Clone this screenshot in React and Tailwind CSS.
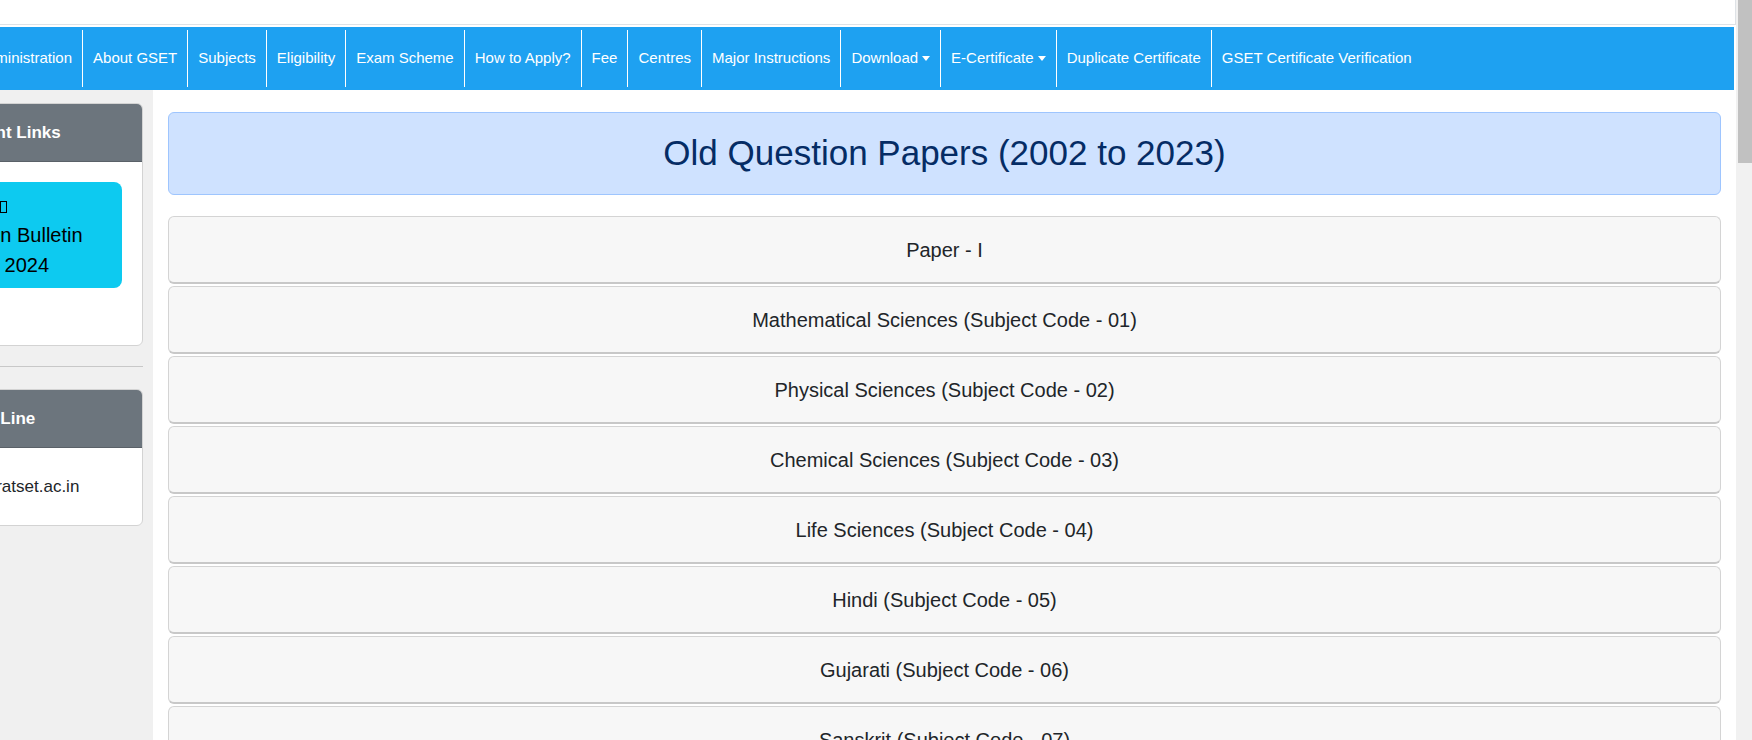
import React from 'react';

const navItems = [
    { label: 'Administration' },
    { label: 'About GSET' },
    { label: 'Subjects' },
    { label: 'Eligibility' },
    { label: 'Exam Scheme' },
    { label: 'How to Apply?' },
    { label: 'Fee' },
    { label: 'Centres' },
    { label: 'Major Instructions' },
    { label: 'Download', caret: true },
    { label: 'E-Certificate', caret: true },
    { label: 'Duplicate Certificate' },
    { label: 'GSET Certificate Verification', last: true },
];

const papers = [
    'Paper - I',
    'Mathematical Sciences (Subject Code - 01)',
    'Physical Sciences (Subject Code - 02)',
    'Chemical Sciences (Subject Code - 03)',
    'Life Sciences (Subject Code - 04)',
    'Hindi (Subject Code - 05)',
    'Gujarati (Subject Code - 06)',
    'Sanskrit (Subject Code - 07)',
];

const SideCard = ({ title, children }) => (
    <div className="border border-[#d3d3d3] rounded-[6px] bg-white overflow-hidden">
        <div className="h-[58px] bg-[#6c757d] border-b border-[#5a6168] flex items-center justify-center text-white font-bold text-[17px]">
            {title}
        </div>
        {children}
    </div>
);

const App = () => {
    return (
        <div className="h-[740px] w-[1752px] overflow-hidden flex bg-white font-['Liberation_Sans',Arial,sans-serif]">
            <div className="w-[1736px] shrink-0 flex flex-col overflow-hidden">
                <div className="h-[25px] shrink-0 border-b border-r border-[#dee2e6]" />

                <nav className="mt-[2px] mr-[2px] h-[63px] shrink-0 bg-[#1ea1f1] flex items-center overflow-hidden">
                    <div className="flex items-center -ml-[33px]">
                        {navItems.map((item) => (
                            <a
                                key={item.label}
                                href="#"
                                className={`h-[57px] px-[10px] flex items-center whitespace-nowrap text-white text-[15px] ${item.last ? '' : 'border-r border-white'}`}
                            >
                                {item.label}
                                {item.caret && (
                                    <span className="ml-[4px] w-0 h-0 border-x-[4px] border-x-transparent border-t-[5px] border-t-white" />
                                )}
                            </a>
                        ))}
                    </div>
                </nav>

                <div className="flex flex-1">
                    <aside className="w-[303px] -ml-[150px] shrink-0 bg-[#f0f0f0] pt-[13px] pl-[1px] pr-[10px]">
                        <SideCard title="Important Links">
                            <div className="px-[20px] pt-[20px] pb-[57px]">
                                <a
                                    href="#"
                                    className="block bg-[#0dcaf0] rounded-[8px] py-[8px] text-center text-black text-[20px] leading-[30px]"
                                >
                                    <span className="inline-block ml-[13px] w-[7px] h-[12px] border border-black align-[-1px]" />
                                    <br />
                                    Information Bulletin
                                    <br />
                                    GSET 2024
                                </a>
                            </div>
                        </SideCard>

                        <hr className="mt-[20px] mb-[22px] border-[#c8c8c8]" />

                        <SideCard title="Help Line">
                            <div className="h-[77px] flex items-center justify-center text-[17px] text-[#212529]">
                                gset@gujaratset.ac.in
                            </div>
                        </SideCard>
                    </aside>

                    <main className="flex-1 px-[15px] pt-[22px]">
                        <div className="h-[83px] border border-[#9ec5fe] bg-[#cfe2ff] rounded-[6px] flex items-center justify-center text-[#052c65] text-[35px]">
                            Old Question Papers (2002 to 2023)
                        </div>

                        <div className="mt-[21px] flex flex-col">
                            {papers.map((p) => (
                                <button
                                    key={p}
                                    className="h-[68px] mb-[2px] shrink-0 bg-[#f7f7f7] border border-[#d4d4d4] border-b-2 border-b-[#c8c8c8] rounded-[6px] flex items-center justify-center text-[20px] text-[#212529]"
                                >
                                    {p}
                                </button>
                            ))}
                        </div>
                    </main>
                </div>
            </div>

            <div className="w-[16px] shrink-0 bg-[#f1f1f1] pl-[2px]">
                <div className="h-[163px] bg-[#c1c1c1]" />
            </div>
        </div>
    );
};

export default App;
